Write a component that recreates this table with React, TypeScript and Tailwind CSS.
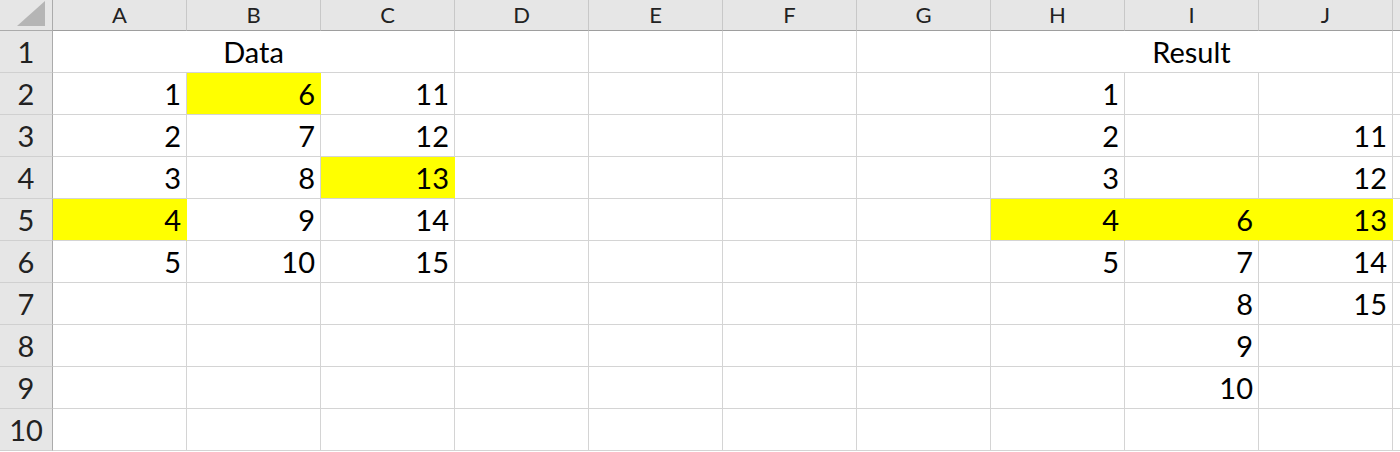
const COLS = ["A", "B", "C", "D", "E", "F", "G", "H", "I", "J"];

type Cell = { v?: string; hl?: boolean; span?: number; center?: boolean };

// sheet contents, keyed by row then column letter
const DATA: Record<number, Record<string, Cell>> = {
  1: { A: { v: "Data", span: 3, center: true }, H: { v: "Result", span: 3, center: true } },
  2: { A: { v: "1" }, B: { v: "6", hl: true }, C: { v: "11" }, H: { v: "1" } },
  3: { A: { v: "2" }, B: { v: "7" }, C: { v: "12" }, H: { v: "2" }, J: { v: "11" } },
  4: { A: { v: "3" }, B: { v: "8" }, C: { v: "13", hl: true }, H: { v: "3" }, J: { v: "12" } },
  5: {
    A: { v: "4", hl: true },
    B: { v: "9" },
    C: { v: "14" },
    H: { v: "4", hl: true },
    I: { v: "6", hl: true },
    J: { v: "13", hl: true },
  },
  6: { A: { v: "5" }, B: { v: "10" }, C: { v: "15" }, H: { v: "5" }, I: { v: "7" }, J: { v: "14" } },
  7: { I: { v: "8" }, J: { v: "15" } },
  8: { I: { v: "9" } },
  9: { I: { v: "10" } },
  10: {},
};

function Row({ n }: { n: number }) {
  const row = DATA[n];
  const cells = [];
  let skip = 0;
  for (const c of COLS) {
    if (skip > 0) {
      skip--;
      continue;
    }
    const cell = row[c] ?? {};
    if (cell.span) skip = cell.span - 1;
    cells.push(
      <div
        key={c}
        className={`h-[42px] border-r border-b flex items-center px-[5px] ${
          cell.span === 3 ? "col-span-3" : ""
        } ${cell.center ? "justify-center" : "justify-end"} ${
          cell.hl ? "bg-[#ffff00] border-r-[#ffff00] border-b-[#d4d4d4]" : "bg-white border-[#d4d4d4]"
        }`}
      >
        {cell.v}
      </div>
    );
  }
  return (
    <>
      <div className="h-[42px] bg-[#e6e6e6] border-r border-r-[#ababab] border-b border-b-[#d0d0d0] flex items-center justify-center text-[#222]">
        {n}
      </div>
      {cells}
      <div className="h-[42px] border-b border-[#d4d4d4] bg-white" />
    </>
  );
}

export default function App() {
  return (
    <div
      className="w-[1400px] h-[452px] overflow-hidden bg-white text-[29px] text-black leading-none"
      style={{ fontFamily: "Lato, 'Open Sans', sans-serif" }}
    >
      <div className="grid grid-cols-[53px_repeat(10,134px)_1fr]">
        {/* corner */}
        <div className="h-[31px] bg-[#e6e6e6] border-r border-b border-[#ababab] relative">
          <svg className="absolute left-0 top-0" width="52" height="30" viewBox="0 0 52 30">
            <polygon points="17,26 45,26 45,1" fill="#b5b5b5" />
          </svg>
        </div>
        {COLS.map((c) => (
          <div
            key={c}
            className="h-[31px] bg-[#e6e6e6] border-r border-r-[#c8c8c8] border-b border-b-[#9e9e9e] flex items-center justify-center text-[22px] text-[#222]"
          >
            {c}
          </div>
        ))}
        <div className="h-[31px] bg-[#e6e6e6] border-b border-[#9e9e9e]" />
        {[1, 2, 3, 4, 5, 6, 7, 8, 9, 10].map((n) => (
          <Row key={n} n={n} />
        ))}
      </div>
    </div>
  );
}
